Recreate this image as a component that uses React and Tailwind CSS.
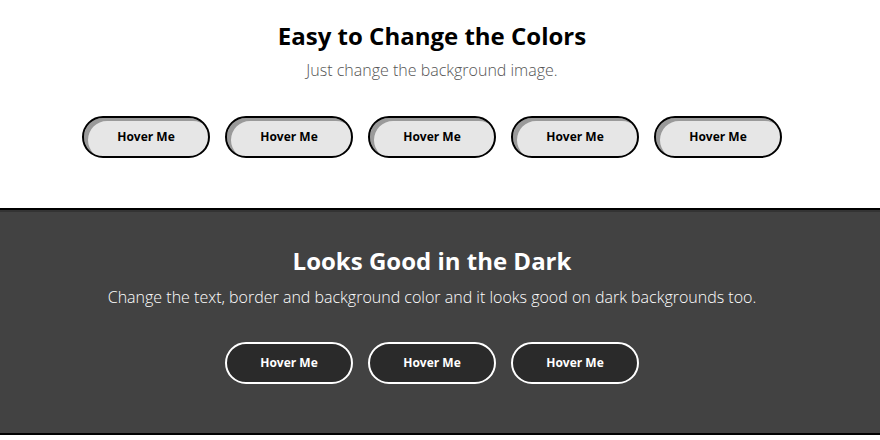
import React from "react";

const LightButton = ({ label }) => (
  <button className="w-[128px] h-[42px] rounded-full border-2 border-black bg-[#e6e6e6] shadow-[inset_4px_3px_0_#9a9a9a] text-[12px] font-bold text-black">
    {label}
  </button>
);

const DarkButton = ({ label }) => (
  <button className="w-[128px] h-[42px] rounded-full border-2 border-white bg-[#2a2a2a] text-[12px] font-bold text-white">
    {label}
  </button>
);

export default function App() {
  return (
    <div className="bg-white h-[440px] font-['Open_Sans',sans-serif]">
      <section className="h-[208px] pr-[16px] pt-[21px] flex flex-col items-center">
        <h1 className="text-[24px] leading-[30px] font-bold text-black">
          Easy to Change the Colors
        </h1>
        <p className="mt-[7px] text-[16px] leading-[24px] font-light text-[#555]">
          Just change the background image.
        </p>
        <div className="mt-[34px] flex gap-[15px]">
          {[1, 2, 3, 4, 5].map((i) => (
            <LightButton key={i} label="Hover Me" />
          ))}
        </div>
      </section>

      <section className="h-[227px] border-y-2 border-black bg-[#424242] shadow-[inset_0_2px_0_#333] pr-[16px] pt-[36px] flex flex-col items-center">
        <h2 className="text-[24px] leading-[30px] font-bold text-white">
          Looks Good in the Dark
        </h2>
        <p className="mt-[9px] text-[16px] leading-[24px] font-light text-white">
          Change the text, border and background color and it looks good on dark backgrounds too.
        </p>
        <div className="mt-[33px] flex gap-[15px]">
          {[1, 2, 3].map((i) => (
            <DarkButton key={i} label="Hover Me" />
          ))}
        </div>
      </section>
    </div>
  );
}
